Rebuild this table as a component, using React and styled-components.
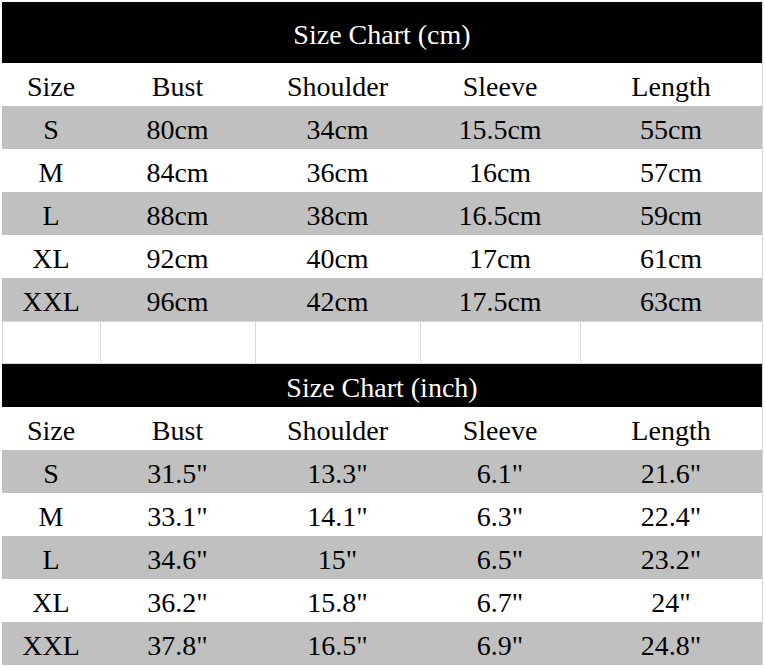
import React from 'react';
import styled, { createGlobalStyle } from 'styled-components';

const GlobalStyle = createGlobalStyle`
  html, body {
    margin: 0;
    padding: 0;
    background: #ffffff;
  }
`;

const Page = styled.div`
  width: 765px;
  height: 670px;
  padding: 2px 0 0 2px;
  box-sizing: border-box;
  font-family: 'Liberation Serif', 'Times New Roman', serif;
  color: #000000;
  overflow: hidden;
`;

const Chart = styled.div`
  display: grid;
  grid-template-columns: 98px 155px 165px 160px 182px;
  width: 760px;
  border-right: 1px solid #d9d9d9;
`;

const TitleBar = styled.div`
  grid-column: 1 / -1;
  height: ${(props) => props.height}px;
  background: #000000;
  color: #ffffff;
  display: flex;
  align-items: center;
  justify-content: center;
  font-size: 28px;
  padding-top: 4px;
  box-sizing: border-box;
`;

const Cell = styled.div`
  height: 43px;
  display: flex;
  align-items: center;
  justify-content: center;
  font-size: 28px;
  padding-top: 4px;
  box-sizing: border-box;
  white-space: nowrap;
  background: ${(props) => (props.shaded ? '#c0c0c0' : '#ffffff')};
`;

const BlankCell = styled.div`
  height: 43px;
  box-sizing: border-box;
  border-left: 1px solid #d9d9d9;
  border-top: 1px solid #d9d9d9;
  border-bottom: 1px solid #d9d9d9;
`;

const headers = ['Size', 'Bust', 'Shoulder', 'Sleeve', 'Length'];

const cmRows = [
  ['S', '80cm', '34cm', '15.5cm', '55cm'],
  ['M', '84cm', '36cm', '16cm', '57cm'],
  ['L', '88cm', '38cm', '16.5cm', '59cm'],
  ['XL', '92cm', '40cm', '17cm', '61cm'],
  ['XXL', '96cm', '42cm', '17.5cm', '63cm'],
];

const inchRows = [
  ['S', '31.5"', '13.3"', '6.1"', '21.6"'],
  ['M', '33.1"', '14.1"', '6.3"', '22.4"'],
  ['L', '34.6"', '15"', '6.5"', '23.2"'],
  ['XL', '36.2"', '15.8"', '6.7"', '24"'],
  ['XXL', '37.8"', '16.5"', '6.9"', '24.8"'],
];

function Section({ title, titleHeight, rows }) {
  return (
    <>
      <TitleBar height={titleHeight}>{title}</TitleBar>
      {headers.map((h) => (
        <Cell key={h}>{h}</Cell>
      ))}
      {rows.map((row, i) =>
        row.map((value, j) => (
          <Cell key={`${i}-${j}`} shaded={i % 2 === 0}>
            {value}
          </Cell>
        ))
      )}
    </>
  );
}

export default function App() {
  return (
    <Page>
      <GlobalStyle />
      <Chart>
        <Section title='Size Chart (cm)' titleHeight={61} rows={cmRows} />
        {headers.map((h) => (
          <BlankCell key={`blank-${h}`} />
        ))}
        <Section title='Size Chart (inch)' titleHeight={43} rows={inchRows} />
      </Chart>
    </Page>
  );
}
